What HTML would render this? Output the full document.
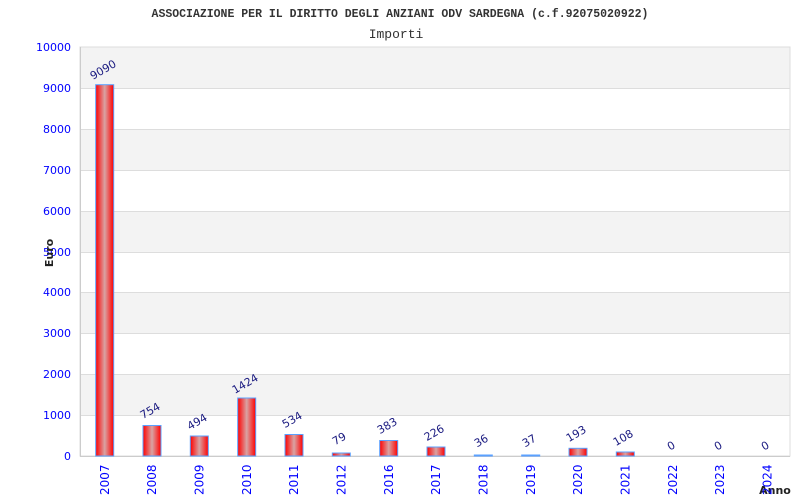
<!DOCTYPE html>
<html><head><meta charset="utf-8"><style>
html,body{margin:0;padding:0;background:#fff;width:800px;height:500px;overflow:hidden}
svg{display:block}
.yl{font-family:"DejaVu Sans","Liberation Sans",sans-serif;font-size:11px;fill:#0000ff;text-anchor:end}
.xl{font-family:"DejaVu Sans","Liberation Sans",sans-serif;font-size:12px;fill:#0000ff}
.vl{font-family:"DejaVu Sans","Liberation Sans",sans-serif;font-size:11px;fill:#1a1a80;text-anchor:middle}
</style></head><body>
<svg width="800" height="500" viewBox="0 0 800 500">
<defs><linearGradient id="g" x1="0" x2="1" y1="0" y2="0">
<stop offset="0" stop-color="#ff0000"/><stop offset="0.5" stop-color="#d9a3a3"/><stop offset="1" stop-color="#ff0000"/></linearGradient></defs>
<text x="400" y="17" text-anchor="middle" font-family="'Liberation Mono',monospace" font-size="11.5" font-weight="bold" fill="#333">ASSOCIAZIONE PER IL DIRITTO DEGLI ANZIANI ODV SARDEGNA (c.f.92075020922)</text>
<text x="396" y="38" text-anchor="middle" font-family="'Liberation Mono',monospace" font-size="13" fill="#333">Importi</text>
<rect x="80" y="47" width="710" height="409" fill="#fff" stroke="#ddd"/>
<g fill="#f3f3f3">
<rect x="80.5" y="47.5" width="709" height="40.9"/>
<rect x="80.5" y="129.2" width="709" height="40.9"/>
<rect x="80.5" y="211" width="709" height="40.9"/>
<rect x="80.5" y="292.8" width="709" height="40.9"/>
<rect x="80.5" y="374.6" width="709" height="40.9"/>
</g>
<g stroke="#ddd" stroke-width="1">
<line x1="80" x2="790" y1="88.5" y2="88.5"/><line x1="80" x2="790" y1="129.5" y2="129.5"/>
<line x1="80" x2="790" y1="170.5" y2="170.5"/><line x1="80" x2="790" y1="211.5" y2="211.5"/>
<line x1="80" x2="790" y1="252.5" y2="252.5"/><line x1="80" x2="790" y1="292.5" y2="292.5"/>
<line x1="80" x2="790" y1="333.5" y2="333.5"/><line x1="80" x2="790" y1="374.5" y2="374.5"/>
<line x1="80" x2="790" y1="415.5" y2="415.5"/><line x1="80" x2="790" y1="456.5" y2="456.5" stroke="#ccc"/>
<line x1="80.5" x2="80.5" y1="47" y2="456" stroke="#ccc"/>
</g>
<g>
<text class="yl" x="71" y="51">10000</text><text class="yl" x="71" y="92">9000</text>
<text class="yl" x="71" y="133">8000</text><text class="yl" x="71" y="174">7000</text>
<text class="yl" x="71" y="215">6000</text><text class="yl" x="71" y="256">5000</text>
<text class="yl" x="71" y="296">4000</text><text class="yl" x="71" y="337">3000</text>
<text class="yl" x="71" y="378">2000</text><text class="yl" x="71" y="419">1000</text>
<text class="yl" x="71" y="460">0</text>
</g>
<text transform="translate(53,253) rotate(-90)" text-anchor="middle" font-family="'DejaVu Sans',sans-serif" font-size="11" font-weight="bold" fill="#222">Euro</text>
<text x="775" y="494" text-anchor="middle" font-family="'DejaVu Sans',sans-serif" font-size="11" font-weight="bold" fill="#222">Anno</text>
<g fill="url(#g)" stroke="#5aa0ff" stroke-width="1">
<rect x="95.7" y="84.7" width="18" height="371.3"/>
<rect x="143" y="425.5" width="18" height="30.5"/>
<rect x="190.3" y="436" width="18" height="20"/>
<rect x="237.7" y="398" width="18" height="58"/>
<rect x="285" y="434.5" width="18" height="21.5"/>
<rect x="332.3" y="453" width="18" height="3"/>
<rect x="379.7" y="440.5" width="18" height="15.5"/>
<rect x="427" y="447" width="18" height="9"/>
<rect x="474.3" y="455" width="18" height="1"/>
<rect x="521.7" y="455" width="18" height="1"/>
<rect x="569" y="448.3" width="18" height="7.7"/>
<rect x="616.3" y="452" width="18" height="4"/>
</g>
<g>
<text class="vl" transform="translate(105,73) rotate(-30)">9090</text>
<text class="vl" transform="translate(152,414) rotate(-30)">754</text>
<text class="vl" transform="translate(199,425) rotate(-30)">494</text>
<text class="vl" transform="translate(247,387) rotate(-30)">1424</text>
<text class="vl" transform="translate(294,423) rotate(-30)">534</text>
<text class="vl" transform="translate(341,442) rotate(-30)">79</text>
<text class="vl" transform="translate(389,429) rotate(-30)">383</text>
<text class="vl" transform="translate(436,436) rotate(-30)">226</text>
<text class="vl" transform="translate(483,444) rotate(-30)">36</text>
<text class="vl" transform="translate(531,444) rotate(-30)">37</text>
<text class="vl" transform="translate(578,437) rotate(-30)">193</text>
<text class="vl" transform="translate(625,441) rotate(-30)">108</text>
<text class="vl" transform="translate(673,449) rotate(-30)">0</text>
<text class="vl" transform="translate(720,449) rotate(-30)">0</text>
<text class="vl" transform="translate(767,449) rotate(-30)">0</text>
</g>
<g>
<text class="xl" transform="translate(109,495) rotate(-90)">2007</text>
<text class="xl" transform="translate(156,495) rotate(-90)">2008</text>
<text class="xl" transform="translate(203.5,495) rotate(-90)">2009</text>
<text class="xl" transform="translate(251,495) rotate(-90)">2010</text>
<text class="xl" transform="translate(298,495) rotate(-90)">2011</text>
<text class="xl" transform="translate(345.5,495) rotate(-90)">2012</text>
<text class="xl" transform="translate(393,495) rotate(-90)">2016</text>
<text class="xl" transform="translate(440,495) rotate(-90)">2017</text>
<text class="xl" transform="translate(487.5,495) rotate(-90)">2018</text>
<text class="xl" transform="translate(535,495) rotate(-90)">2019</text>
<text class="xl" transform="translate(582,495) rotate(-90)">2020</text>
<text class="xl" transform="translate(629.5,495) rotate(-90)">2021</text>
<text class="xl" transform="translate(677,495) rotate(-90)">2022</text>
<text class="xl" transform="translate(724,495) rotate(-90)">2023</text>
<text class="xl" transform="translate(771.5,495) rotate(-90)">2024</text>
</g>
</svg>
</body></html>
